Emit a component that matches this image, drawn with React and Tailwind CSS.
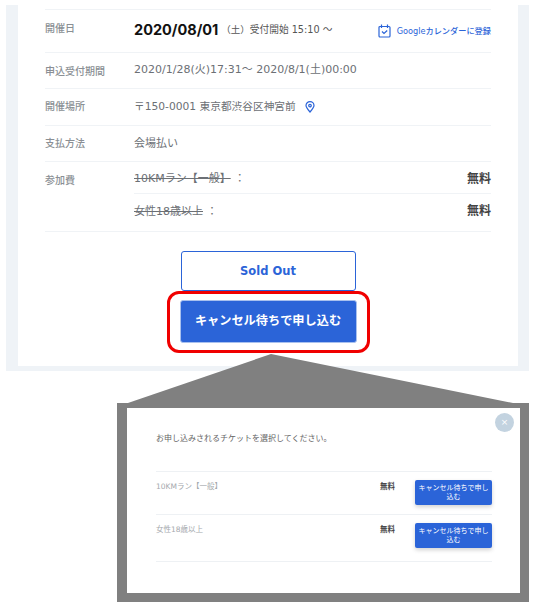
const jp = { fontFamily: '"DejaVu Sans","Noto Sans CJK JP",sans-serif' };

function Row({ label, className = "", bodyClass = "", children }) {
  return (
    <div className={`flex border-t border-[#f0f3f6] ${className}`}>
      <div className="w-[89px] shrink-0 text-[10px] font-medium text-[#8a8f94]" style={{ fontFamily: '"Noto Sans CJK JP",sans-serif' }}>{label}</div>
      <div className={`min-w-0 flex-1 text-[11px] text-[#6c7075] ${bodyClass}`}>{children}</div>
    </div>
  );
}

function Ticket({ name, last }) {
  return (
    <div className={`flex items-start border-t border-[#eef1f4] pt-[8px] ${last ? "h-[48px] border-b" : "h-[43px]"}`}>
      <div className="flex-1 pt-[1px] text-[7.5px] leading-[11px] text-[#a5a9ad]">{name}</div>
      <div className="w-[35px] pt-[1px] text-[7.5px] font-bold leading-[11px] text-[#444]">無料</div>
      <div className="flex h-[25px] w-[77px] items-center justify-center rounded-[2px] bg-[#2b64d8] px-[3px] text-center text-[7px] leading-[9px] text-white shadow-[0_2px_4px_rgba(0,0,0,0.18)]">
        キャンセル待ちで申し込む
      </div>
    </div>
  );
}

export default function App() {
  return (
    <div className="relative h-[613px] w-[542px] overflow-hidden bg-white" style={jp}>
      <div className="ml-[6px] mt-[5px] h-[366px] w-[523px] bg-[#eff3f7] px-[12px] pb-[5px]">
        <div className="h-full w-[500px] bg-white px-[27px] pt-[4px]">
          <Row label="開催日" className="h-[43px] pt-[10px]">
            <div className="flex items-center">
              <span className="text-[14.5px] font-bold leading-[20px] text-[#111]" style={{ fontFamily: '"Inter",sans-serif' }}>2020/08/01</span>
              <span className="ml-[3px] text-[9.5px] text-[#555]">（土）</span>
              <span className="text-[9.7px] text-[#555]">受付開始 15:10 ～</span>
              <span className="ml-auto flex items-center gap-[6px] pt-[2px] text-[8.2px] font-medium text-[#2b64d8]">
                <svg width="13" height="14" viewBox="0 0 13 14" fill="none" stroke="#2b64d8" strokeWidth="1.2">
                  <rect x="1" y="2.5" width="11" height="10.5" rx="1" />
                  <path d="M3.5 0.5V4M9.5 0.5V4M4 7.5l2 2 3.2-3" />
                </svg>
                Googleカレンダーに登録
              </span>
            </div>
          </Row>
          <Row label="申込受付期間" className="h-[36px] items-center">2020/1/28(火)17:31～ 2020/8/1(土)00:00</Row>
          <Row label="開催場所" className="h-[37px] items-center pb-[3px]" bodyClass="pt-[3px]">
            <span className="flex items-center gap-[9px] text-[10.7px]">
              〒150-0001 東京都渋谷区神宮前
              <svg width="10" height="12" viewBox="0 0 10 12" fill="none" stroke="#2b64d8" strokeWidth="1.2">
                <path d="M5 11C2.5 8.2 1 6.4 1 4.6a4 4 0 0 1 8 0C9 6.4 7.5 8.2 5 11Z" />
                <circle cx="5" cy="4.6" r="1.3" />
              </svg>
            </span>
          </Row>
          <Row label="支払方法" className="h-[36px] items-center pb-[2px]" bodyClass="pt-[4px]">会場払い</Row>
          <Row label="参加費" className="items-start border-b pt-[10px]">
            <div className="-mt-[10px]">
              <div className="flex h-[32px] items-center justify-between border-b border-[#f0f3f6]">
                <span className="pt-[4px]"><s>10KMラン【一般】</s> ：</span>
                <span className="pt-[2px] text-[12px] font-bold text-[#444]">無料</span>
              </div>
              <div className="flex h-[37px] items-start justify-between pt-[8px]">
                <span className="pt-[2px]"><s>女性18歳以上</s> ：</span>
                <span className="text-[12px] font-bold text-[#444]">無料</span>
              </div>
            </div>
          </Row>
          <div className="mt-[19px] flex flex-col items-center">
            <div className="flex h-[40px] w-[175px] items-center justify-center rounded-[3px] border-[1.5px] border-[#2b64d8] pt-[1px] text-[11.5px] font-bold text-[#2b64d8]">
              Sold Out
            </div>
            <div className="relative mt-[9px] flex h-[43px] w-[177px] items-center justify-center rounded-[3px] border border-[#a9c1ee] bg-[#2b64d8] text-[12.2px] font-bold text-white">
              キャンセル待ちで申し込む
              <div className="absolute -inset-x-[14px] -bottom-[11px] -top-[10px] rounded-[12px] border-[3px] border-[#f00000]" />
            </div>
          </div>
        </div>
      </div>
      <svg className="absolute left-0 top-0" width="542" height="613">
        <polygon points="271,354 125,404 518,404" fill="#808080" />
      </svg>
      <div className="relative ml-[117px] mt-[32px] h-[199px] w-[412px] bg-[#808080] pb-[9px] pl-[10px] pr-[9px] pt-[5px]">
        <div className="relative h-full bg-white pl-[29px] pr-[28px] pt-[25px]">
          <div className="text-[8px] text-[#666]">お申し込みされるチケットを選択してください。</div>
          <div className="mt-[26px]">
            <Ticket name="10KMラン【一般】" />
            <Ticket name="女性18歳以上" last />
          </div>
          <div className="absolute right-[6px] top-[5px] flex h-[19px] w-[19px] items-center justify-center rounded-full bg-[#c3d3e0] text-[9px] text-white">×</div>
        </div>
      </div>
    </div>
  );
}
